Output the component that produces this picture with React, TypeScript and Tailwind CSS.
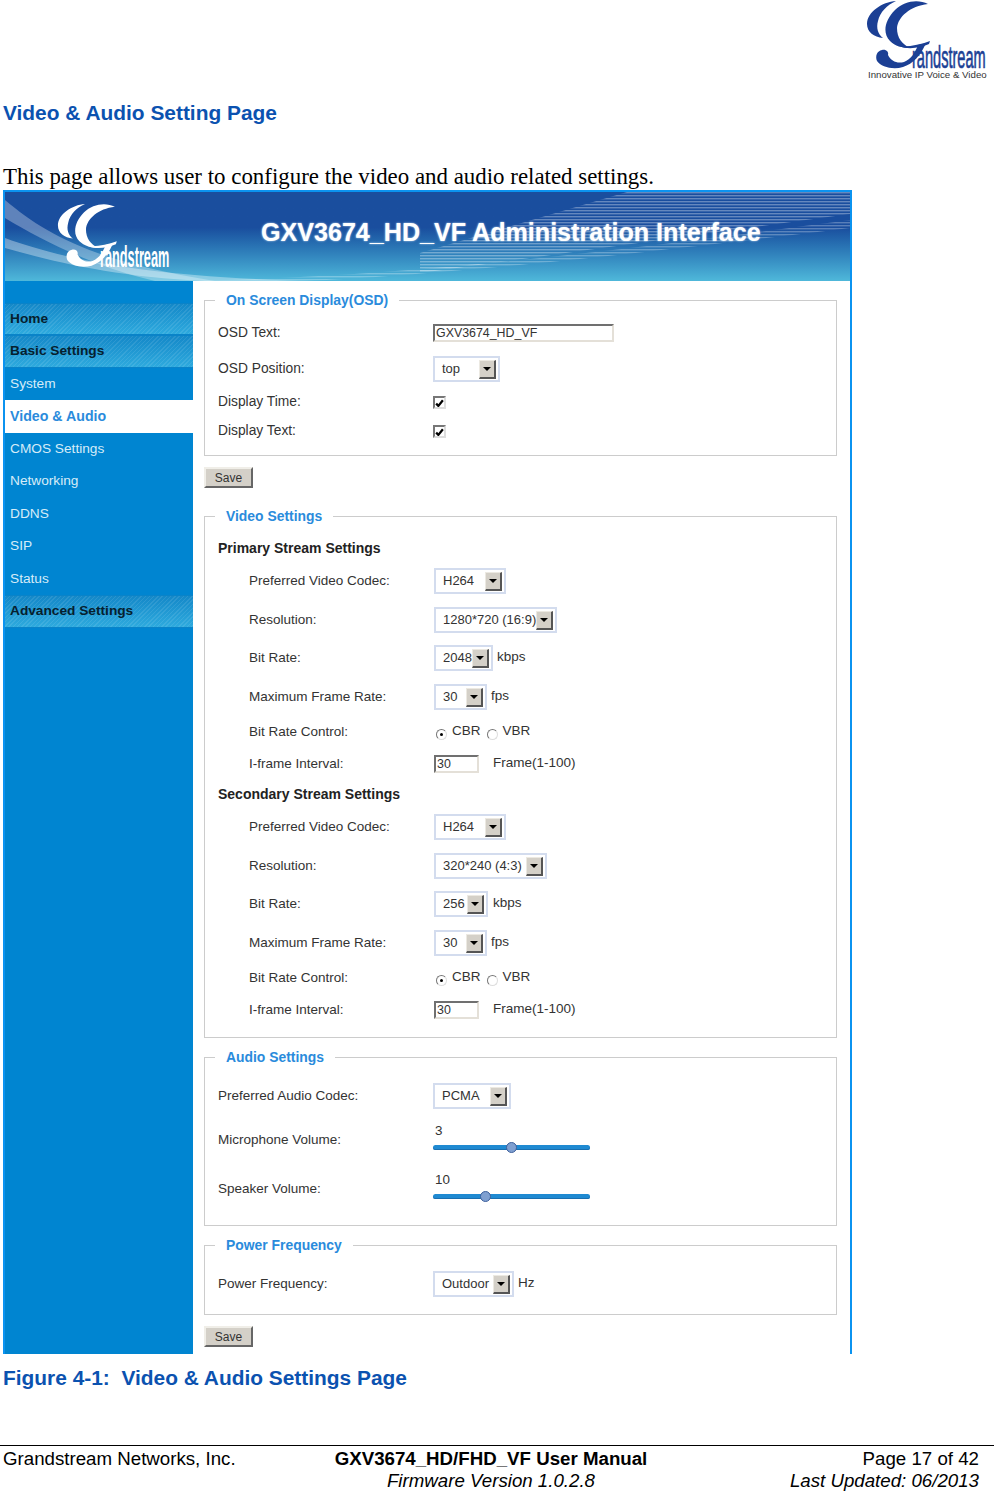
import type { ReactNode } from "react";

const stripes =
  "bg-[repeating-linear-gradient(135deg,rgba(255,255,255,0.09)_0,rgba(255,255,255,0.09)_1px,transparent_1px,transparent_3px),linear-gradient(to_bottom,#1488c8,#2eaade)]";

function GMark({ color, bold }: { color: string; bold?: boolean }) {
  return (
    <>
      <path fill={color} d="M30 1C16 2 1 12 1 24C1 32 8 37 17 38C12 34 10 28 12 21C14 12 21 5 30 1Z" />
      <path fill={color} d="M62 4C52-1 38 1 29 10C19 20 16 33 24 41C29 46 36 48 44 48C36 44 31 38 31 28C32 17 44 6 62 4Z" />
      <path fill={color} d="M33 46C42 47 54 45 64 41L63 44C54 48 42 50 33 46Z" />
      <path fill={color} d="M60 43L52 45C49 53 45 59 38 62C31 64 25 61 22 55C23 52 20 49 16 50C11 51 9 56 11 61C15 67 27 70 37 67C47 64 55 55 60 43Z" />
      <g transform={bold ? "translate(46 68) scale(0.44 1)" : "translate(46 68) scale(0.47 1)"}>
        <text
          fontSize="31"
          fill={color}
          stroke={color}
          strokeWidth={bold ? 0 : 0.7}
          fontWeight={bold ? 700 : 400}
          className="font-['Liberation_Sans',sans-serif]"
        >
          randstream
        </text>
      </g>
    </>
  );
}

function Row({ h, label, indent, children }: { h: string; label: string; indent?: boolean; children: ReactNode }) {
  return (
    <div className={`flex items-center ${h}`}>
      <div className={indent ? "w-[229px] pl-[44px] pt-[1px]" : "w-[228px] pl-[13px] pt-[1px]"}>{label}</div>
      <div className="flex items-center">{children}</div>
    </div>
  );
}

function Select({ value, w }: { value: string; w: string }) {
  return (
    <div className={`flex h-[26px] items-center justify-between border-2 border-[#d3dcee] pl-[7px] pr-[2px] ${w}`}>
      <span className="whitespace-nowrap text-[13px]">{value}</span>
      <span className="flex h-[19px] w-[17px] shrink-0 items-center justify-center border border-b-2 border-r-2 border-[#ece9e2] border-b-[#555] border-r-[#555] bg-[#d4d0c8]">
        <span className="h-0 w-0 border-x-[4px] border-t-[4px] border-x-transparent border-t-black" />
      </span>
    </div>
  );
}

function Unit({ children, ml }: { children: ReactNode; ml: string }) {
  return <span className={`mb-[2px] ${ml}`}>{children}</span>;
}

function Check() {
  return (
    <span className="flex h-[13px] w-[13px] items-center justify-center border-2 border-[#ddd] border-l-[#777] border-t-[#777] bg-white">
      <svg width="9" height="9" viewBox="0 0 8 8">
        <path d="M1 5L3 7L7 2" stroke="#000" strokeWidth="2" fill="none" />
      </svg>
    </span>
  );
}

function Radio({ on }: { on?: boolean }) {
  return (
    <span className="mt-[4px] flex h-[11px] w-[11px] items-center justify-center rounded-full border border-[#777] border-b-[#ddd] border-r-[#ddd] bg-white">
      {on && <span className="h-[3px] w-[3px] rounded-full bg-black" />}
    </span>
  );
}

function TextBox({ value, w }: { value: string; w: string }) {
  return (
    <div className={`h-[18px] border-2 border-[#e4e0d8] border-l-[#707070] border-t-[#707070] pl-[1px] text-[12.4px] leading-[15px] ${w}`}>
      {value}
    </div>
  );
}

function SaveButton({ mt }: { mt: string }) {
  return (
    <div className={`flex h-[21px] w-[49px] items-center justify-center border-2 border-[#f0eee8] border-b-[#666] border-r-[#666] bg-[#d4d0c8] text-[12px] ${mt}`}>
      Save
    </div>
  );
}

function Box({ title, mt, pad, children }: { title: string; mt: string; pad: string; children: ReactNode }) {
  return (
    <fieldset className={`border border-[#ccc] ${mt} ${pad}`}>
      <legend className="ml-[10px] px-[11px] text-[13.9px] font-bold leading-5 text-[#2a8bdc]">{title}</legend>
      {children}
    </fieldset>
  );
}

function Slider({ value, knob }: { value: string; knob: string }) {
  return (
    <div className="mb-[8px] w-[157px]">
      <div className="mb-[6px] pl-[2px] text-[13.4px] leading-4">{value}</div>
      <div className="relative h-[5px] rounded-full bg-[#1f8ad2] shadow-[inset_0_-1px_0_#1a6fb0]">
        <span className={`absolute top-[-3px] h-[11px] w-[11px] rounded-full border border-[#3c5f9c] bg-[#7f9fd0] ${knob}`} />
      </div>
    </div>
  );
}

function Stream({ heading, res, resW, bit, bitW, unitMl, mt }: { heading: string; res: string; resW: string; bit: string; bitW: string; unitMl: string; mt: string }) {
  return (
    <>
      <div className={`mb-[4px] ml-[13px] h-5 text-[14px] font-bold leading-5 text-[#222] ${mt}`}>{heading}</div>
      <Row h="h-[38px]" label="Preferred Video Codec:" indent>
        <Select value="H264" w="w-[72px]" />
      </Row>
      <Row h="h-[40px]" label="Resolution:" indent>
        <Select value={res} w={resW} />
      </Row>
      <Row h="h-[36px]" label="Bit Rate:" indent>
        <Select value={bit} w={bitW} />
        <Unit ml={unitMl}>kbps</Unit>
      </Row>
      <Row h="h-[42px]" label="Maximum Frame Rate:" indent>
        <Select value="30" w="w-[53px]" />
        <Unit ml="ml-[4px]">fps</Unit>
      </Row>
      <Row h="h-[28px]" label="Bit Rate Control:" indent>
        <span className="ml-[2px]"><Radio on /></span>
        <span className="mb-[2px] ml-[5px]">CBR</span>
        <span className="ml-[6px]"><Radio /></span>
        <span className="mb-[2px] ml-[5px]">VBR</span>
      </Row>
      <Row h="h-[36px]" label="I-frame Interval:" indent>
        <TextBox value="30" w="w-[45px]" />
        <span className="mb-[2px] ml-[14px]">Frame(1-100)</span>
      </Row>
    </>
  );
}

const menu = [
  { name: "Home", kind: "head" },
  { name: "Basic Settings", kind: "head" },
  { name: "System", kind: "item" },
  { name: "Video & Audio", kind: "active" },
  { name: "CMOS Settings", kind: "item" },
  { name: "Networking", kind: "item" },
  { name: "DDNS", kind: "item" },
  { name: "SIP", kind: "item" },
  { name: "Status", kind: "item" },
  { name: "Advanced Settings", kind: "head" },
];

export default function App() {
  return (
    <div className="flex h-[1491px] w-[994px] flex-col overflow-hidden bg-white font-['Liberation_Sans',sans-serif] text-[#333]">
      <div className="flex h-[100px] shrink-0 justify-end pr-[6px]">
        <svg width="122" height="80" viewBox="0 0 122 80">
          <GMark color="#1b3f94" />
          <text x="2" y="78" fontSize="9.7" fill="#333" className="font-['Liberation_Sans',sans-serif]">
            Innovative IP Voice &amp; Video
          </text>
        </svg>
      </div>
      <h1 className="ml-[3px] text-[20.9px] font-bold leading-[26px] text-[#0b52b0]">Video &amp; Audio Setting Page</h1>
      <p className="ml-[3px] mt-[38px] whitespace-nowrap font-['Liberation_Serif',serif] text-[22.9px] leading-[26px] text-black">
        This page allows user to configure the video and audio related settings.
      </p>

      <div className="ml-[3px] flex h-[1164px] w-[849px] shrink-0 flex-col overflow-hidden border-x-2 border-t-2 border-[#0b93f0]">
        <div className="relative h-[89px] shrink-0 overflow-hidden bg-gradient-to-b from-[#1a4e9e] from-40% to-[#4fb8da]">
          <svg className="absolute inset-0" width="845" height="89" viewBox="0 0 845 89">
            <defs>
              <pattern id="lines" width="4" height="3" patternUnits="userSpaceOnUse">
                <rect width="4" height="1.4" fill="#fff" opacity="0.55" />
              </pattern>
            </defs>
            <path d="M0 8C40 42 90 70 210 89L150 89C90 75 40 50 0 26Z" fill="#fff" opacity="0.3" />
            <path d="M0 46C60 68 150 86 310 89L200 89C110 85 50 70 0 56Z" fill="#fff" opacity="0.35" />
            <path d="M170 89C400 86 600 60 845 28L845 36C600 66 420 84 300 89Z" fill="url(#lines)" opacity="0.5" />
            <path d="M415 61L622 0L845 0L845 22L415 81Z" fill="url(#lines)" opacity="0.6" />
          </svg>
          <svg className="absolute left-[52px] top-[11px]" width="114" height="72" viewBox="0 0 122 77">
            <GMark color="#fff" bold />
          </svg>
          <div className="absolute left-[256px] top-[26px] whitespace-nowrap text-[25.1px] font-bold leading-7 text-white [text-shadow:0_0_2px_#cfe3f5]">
            GXV3674_HD_VF Administration Interface
          </div>
        </div>

        <div className="flex flex-1">
          <nav className="w-[188px] shrink-0 bg-[#0085d1] pt-[21.5px] text-[13.7px]">
            {menu.map((m) => (
              <div
                key={m.name}
                className={
                  m.kind === "head"
                    ? `flex h-[32.5px] items-center border-y border-[#0a83c8] pl-[5px] pt-[1px] font-bold text-[#06202e] ${stripes}`
                    : m.kind === "active"
                      ? "flex h-[32.5px] items-center bg-white pl-[5px] pt-[1px] text-[14.2px] font-bold text-[#2a8bdc]"
                      : "flex h-[32.5px] items-center pl-[5px] pt-[1px] text-[#d6ecf8]"
                }
              >
                {m.name}
              </div>
            ))}
          </nav>

          <main className="flex-1 bg-white pl-[11px] pr-[13px] text-[13.5px]">
            <Box title="On Screen Display(OSD)" mt="mt-[9px]" pad="pb-[10px] pt-[5px] text-[13.8px]">
              <Row h="h-[36px]" label="OSD Text:">
                <TextBox value="GXV3674_HD_VF" w="w-[181px]" />
              </Row>
              <Row h="h-[36px]" label="OSD Position:">
                <Select value="top" w="w-[67px]" />
              </Row>
              <Row h="h-[30px]" label="Display Time:">
                <Check />
              </Row>
              <Row h="h-[28px]" label="Display Text:">
                <Check />
              </Row>
            </Box>
            <SaveButton mt="mt-[11px]" />

            <Box title="Video Settings" mt="mt-[18px]" pad="pb-[9px] pt-[12px]">
              <Stream heading="Primary Stream Settings" res="1280*720 (16:9)" resW="w-[123px]" bit="2048" bitW="w-[59px]" unitMl="ml-[4px]" mt="mt-0" />
              <Stream heading="Secondary Stream Settings" res="320*240 (4:3)" resW="w-[113px]" bit="256" bitW="w-[54px]" unitMl="ml-[5px]" mt="mt-[2px]" />
            </Box>

            <Box title="Audio Settings" mt="mt-[9px]" pad="pb-[11px] pt-[9px]">
              <Row h="h-[40px]" label="Preferred Audio Codec:">
                <Select value="PCMA" w="w-[78px]" />
              </Row>
              <Row h="h-[48px]" label="Microphone Volume:">
                <Slider value="3" knob="left-[73px]" />
              </Row>
              <Row h="h-[50px]" label="Speaker Volume:">
                <Slider value="10" knob="left-[47px]" />
              </Row>
            </Box>

            <Box title="Power Frequency" mt="mt-[9px]" pad="pb-[10px] pt-[9px]">
              <Row h="h-[40px]" label="Power Frequency:">
                <Select value="Outdoor" w="w-[81px]" />
                <Unit ml="ml-[4px]">Hz</Unit>
              </Row>
            </Box>
            <SaveButton mt="mt-[11px]" />
          </main>
        </div>
      </div>

      <div className="ml-[3px] mt-[11px] whitespace-pre text-[20.9px] font-bold leading-[26px] text-[#0b52b0]">
        Figure 4-1:  Video &amp; Audio Settings Page
      </div>

      <footer className="mt-[54px] grid grid-cols-[1fr_auto_1fr] border-t border-black pl-[3px] pr-[15px] pt-[2px] text-[18.7px] leading-[22px] text-black">
        <div>Grandstream Networks, Inc.</div>
        <div className="text-center font-bold">GXV3674_HD/FHD_VF User Manual</div>
        <div className="text-right">Page 17 of 42</div>
        <div />
        <div className="text-center italic">Firmware Version 1.0.2.8</div>
        <div className="text-right italic">Last Updated: 06/2013</div>
      </footer>
    </div>
  );
}
